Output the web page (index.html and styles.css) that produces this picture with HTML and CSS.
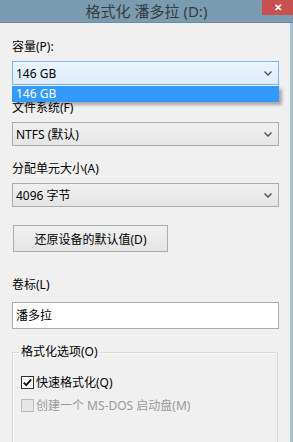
FILE: index.html
```html
<!DOCTYPE html>
<html lang="zh-CN">
<head>
    <meta charset="UTF-8">
    <title>格式化 潘多拉 (D:)</title>
    <link rel="stylesheet" href="styles.css">
</head>
<body>
    <div class="window">
        <div class="titlebar">
            格式化 潘多拉 (D:)
            <span class="close">✕</span>
        </div>

        <div class="content">
            <div class="field">
                <div class="label">容量(P):</div>
                <div class="combo-wrap">
                    <div class="combo focused">
                        <span>146 GB</span>
                        <svg class="chevron" width="8" height="5" viewBox="0 0 8 5"><polyline points="0.5,0.5 4,4 7.5,0.5" fill="none" stroke="#505050" stroke-width="1.4"/></svg>
                    </div>
                    <div class="dropdown">146 GB</div>
                </div>
            </div>

            <div class="field">
                <div class="label">文件系统(F)</div>
                <div class="combo">
                    <span>NTFS (默认)</span>
                    <svg class="chevron" width="8" height="5" viewBox="0 0 8 5"><polyline points="0.5,0.5 4,4 7.5,0.5" fill="none" stroke="#505050" stroke-width="1.4"/></svg>
                </div>
            </div>

            <div class="field">
                <div class="label">分配单元大小(A)</div>
                <div class="combo">
                    <span>4096 字节</span>
                    <svg class="chevron" width="8" height="5" viewBox="0 0 8 5"><polyline points="0.5,0.5 4,4 7.5,0.5" fill="none" stroke="#505050" stroke-width="1.4"/></svg>
                </div>
            </div>

            <button class="btn">还原设备的默认值(D)</button>

            <div class="label volume-label">卷标(L)</div>
            <div class="textbox">潘多拉</div>

            <fieldset class="group">
                <legend>格式化选项(O)</legend>
                <div class="check-row">
                    <svg class="checkbox" width="13" height="13" viewBox="0 0 13 13">
                        <rect x="0.5" y="0.5" width="12" height="12" fill="#fff" stroke="#333"/>
                        <polyline points="2.8,6.6 5.2,9.2 10.2,3.4" fill="none" stroke="#111" stroke-width="1.8"/>
                    </svg>
                    <span>快速格式化(Q)</span>
                </div>
                <div class="check-row disabled">
                    <svg class="checkbox" width="13" height="13" viewBox="0 0 13 13">
                        <rect x="0.5" y="0.5" width="12" height="12" fill="#e6e6e6" stroke="#bcbcbc"/>
                    </svg>
                    <span>创建一个 MS-DOS 启动盘(M)</span>
                </div>
            </fieldset>
        </div>
    </div>
</body>
</html>
```

FILE: styles.css
```css
body {
    margin: 0;
    font-family: "Noto Sans", "Noto Sans CJK SC", sans-serif;
    font-size: 12px;
    color: #000;
    background: #f0f0f0;
}
.window {
    width: 293px;
    height: 442px;
    overflow: hidden;
}
.titlebar {
    position: relative;
    height: 22px;
    line-height: 22px;
    border-bottom: 1px solid #6d8c9f;
    background: #7b9cb0;
    text-align: center;
    font-size: 15px;
    color: #343c42;
}
.close {
    position: absolute;
    top: 0;
    right: 0;
    width: 31px;
    height: 15px;
    line-height: 14px;
    background: #c75050;
    color: #fff;
    font-size: 10px;
    font-weight: bold;
    text-align: center;
}
.content {
    height: 419px;
    padding: 16px 11px 0 12px;
    border-right: 3px solid #a9c0ce;
    background: #f0f0f0;
}
.label {
    height: 16px;
    line-height: 16px;
    margin-bottom: 6px;
}
.field {
    margin-bottom: 15px;
}
.combo-wrap {
    position: relative;
}
.combo {
    display: flex;
    align-items: center;
    justify-content: space-between;
    box-sizing: border-box;
    height: 24px;
    padding: 0 6px 0 3px;
    border: 1px solid #acacac;
    background: linear-gradient(#f0f0f0, #e5e5e5);
}
.combo.focused {
    border-color: #7eb4ea;
    background: linear-gradient(#ecf4fc, #dcecfc);
}
.dropdown {
    position: absolute;
    top: 25px;
    left: 0;
    right: 0;
    height: 16px;
    line-height: 16px;
    padding-left: 4px;
    background: #3399ff;
    color: #fff;
    box-shadow: 3px 3px 3px rgba(0, 0, 0, 0.3);
}
.btn {
    display: block;
    box-sizing: border-box;
    width: 155px;
    height: 27px;
    margin: 18px 0 0 1px;
    padding: 0;
    border: 1px solid #acacac;
    background: linear-gradient(#f0f0f0, #e5e5e5);
    font-family: inherit;
    font-size: 12px;
    color: #000;
}
.volume-label {
    margin-top: 25px;
    margin-bottom: 9px;
}
.textbox {
    box-sizing: border-box;
    height: 27px;
    line-height: 25px;
    padding-left: 3px;
    border: 1px solid #acacac;
    background: #fff;
}
.group {
    margin: 15px 1px 0 0;
    padding: 0 8px 60px 8px;
    border: 1px solid #d8d8d8;
    box-shadow: inset 1px 1px 0 #fafafa;
}
.group legend {
    margin-left: -2px;
    padding: 0 2px;
    line-height: 16px;
}
.check-row {
    display: flex;
    align-items: center;
    gap: 2px;
    height: 16px;
    margin-top: 14px;
}
.check-row + .check-row {
    margin-top: 7px;
}
.check-row.disabled {
    color: #9a9a9a;
}
```
